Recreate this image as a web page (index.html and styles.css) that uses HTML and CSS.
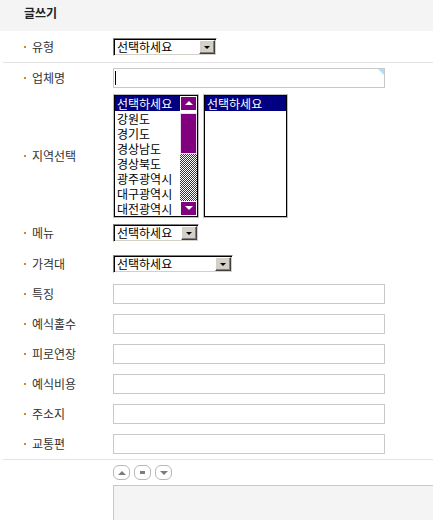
FILE: index.html
```html
<!DOCTYPE html>
<html lang="ko">
<head>
<meta charset="utf-8">
<title>글쓰기</title>
<link rel="stylesheet" href="styles.css">
</head>
<body>
<div class="board">
  <div class="head">글쓰기</div>
  <div class="form">
    <div class="row sep">
      <div class="label">유형</div>
      <span class="sel w104"><select><option>선택하세요</option></select><span class="btn"><i class="tri"></i></span></span>
    </div>
    <div class="row">
      <div class="label">업체명</div>
      <span class="focus"><input class="txt" type="text"><span class="corner"></span></span>
    </div>
    <div class="row region">
      <div class="label">지역선택</div>
      <div class="lists">
        <div class="list first">
          <ul class="items">
            <li class="on">선택하세요</li>
            <li>강원도</li>
            <li>경기도</li>
            <li>경상남도</li>
            <li>경상북도</li>
            <li>광주광역시</li>
            <li>대구광역시</li>
            <li>대전광역시</li>
          </ul>
          <div class="sbar">
            <span class="sbtn"><i class="up"></i></span>
            <span class="thumb"></span>
            <span class="track"></span>
            <span class="sbtn"><i class="down"></i></span>
          </div>
        </div>
        <div class="list second">
          <ul class="items">
            <li class="on">선택하세요</li>
          </ul>
        </div>
      </div>
    </div>
    <div class="row">
      <div class="label">메뉴</div>
      <span class="sel w86"><select><option>선택하세요</option></select><span class="btn"><i class="tri"></i></span></span>
    </div>
    <div class="row tall">
      <div class="label">가격대</div>
      <span class="sel w120"><select><option>선택하세요</option></select><span class="btn"><i class="tri"></i></span></span>
    </div>
    <div class="row">
      <div class="label">특징</div>
      <input class="txt" type="text">
    </div>
    <div class="row">
      <div class="label">예식홀수</div>
      <input class="txt" type="text">
    </div>
    <div class="row">
      <div class="label">피로연장</div>
      <input class="txt" type="text">
    </div>
    <div class="row">
      <div class="label">예식비용</div>
      <input class="txt" type="text">
    </div>
    <div class="row">
      <div class="label">주소지</div>
      <input class="txt" type="text">
    </div>
    <div class="row sep last">
      <div class="label">교통편</div>
      <input class="txt" type="text">
    </div>
    <div class="tools">
      <span class="tb"><i class="t-up"></i></span>
      <span class="tb"><i class="t-mid"></i></span>
      <span class="tb"><i class="t-down"></i></span>
    </div>
    <textarea class="editor"></textarea>
  </div>
</div>
</body>
</html>
```

FILE: styles.css
```css
* { box-sizing: border-box; }
html, body { overflow: hidden; }
body {
  margin: 0;
  background: #fff;
  font-family: "Noto Sans CJK KR", "Noto Sans", sans-serif;
  font-size: 12px;
  color: #333;
}
.head {
  height: 31px;
  background: #f4f4f4;
  padding: 5px 0 0 24px;
  font-weight: bold;
  line-height: 16px;
  color: #222;
}
.row {
  display: flex;
  align-items: center;
  height: 30px;
  margin-left: 3px;
}
.row.sep { border-bottom: 1px solid #e3e3e3; height: 32px; }
.row.sep.last { height: 31px; }
.row.tall { height: 31px; }
.row.region { height: 125px; }
.label {
  width: 110px;
  flex: none;
  padding-left: 21px;
  display: flex;
  align-items: center;
  gap: 6px;
  line-height: 14px;
  color: #333;
}
.label::before {
  content: "";
  width: 2px;
  height: 2px;
  background: #e0841c;
}

/* classic select */
.sel {
  display: inline-flex;
  align-items: stretch;
  height: 18px;
  padding: 1px;
  border: 1px solid;
  border-color: #808080 #fff #fff #808080;
  box-shadow: inset 1px 1px 0 #000, inset -1px -1px 0 #d4d0c8;
  background: #fff;
}
.w104 { width: 104px; }
.w86 { width: 86px; }
.w120 { width: 120px; }
.sel select {
  appearance: none;
  -webkit-appearance: none;
  flex: 1;
  min-width: 0;
  border: 0;
  background: transparent;
  font: 12px/14px "Noto Sans CJK KR", sans-serif;
  color: #000;
  padding: 0 0 0 2px;
  height: 14px;
  outline: none;
}
.btn {
  width: 16px;
  flex: none;
  background: #d4d0c8;
  border: 1px solid;
  border-color: #fff #404040 #404040 #fff;
  box-shadow: inset -1px -1px 0 #808080;
  display: flex;
  align-items: center;
  justify-content: center;
}
.tri {
  width: 0;
  height: 0;
  border-left: 3px solid transparent;
  border-right: 3px solid transparent;
  border-top: 3px solid #000;
  margin-top: 1px;
}

/* text inputs */
.txt {
  width: 272px;
  height: 20px;
  border: 1px solid #c9c9c9;
  padding: 0 3px;
  font: 12px "Noto Sans CJK KR", sans-serif;
  background: #fff;
  outline: none;
}
.focus { position: relative; display: inline-flex; }
.focus::before {
  content: "";
  position: absolute;
  left: 2px;
  top: 3px;
  width: 1px;
  height: 14px;
  background: #000;
}
.corner {
  position: absolute;
  top: 1px;
  right: 1px;
  width: 0;
  height: 0;
  border-top: 6px solid #a6e2ff;
  border-left: 6px solid transparent;
}

/* list boxes */
.lists { display: flex; gap: 4px; }
.list {
  height: 124px;
  border: 1px solid #bdbdbd;
  box-shadow: inset 0 0 0 1px #000;
  padding: 1px;
  display: flex;
  background: #fff;
}
.list.first { width: 86px; }
.list.second { width: 85px; }
.items {
  list-style: none;
  margin: 0;
  padding: 0;
  flex: 1;
  min-width: 0;
  overflow: hidden;
}
.items li {
  height: 15px;
  line-height: 15px;
  padding-left: 2px;
  white-space: nowrap;
  color: #000;
  font-size: 12px;
}
.items li.on { background: #000080; color: #fff; }
.sbar {
  width: 17px;
  flex: none;
  display: flex;
  flex-direction: column;
}
.sbtn {
  height: 15px;
  flex: none;
  background: #800080;
  box-shadow: inset 1px 1px 0 #fff, inset -1px -1px 0 #fff;
  display: flex;
  align-items: center;
  justify-content: center;
}
.up, .down {
  width: 0;
  height: 0;
  border-left: 4px solid transparent;
  border-right: 4px solid transparent;
}
.up { border-bottom: 4px solid #fff; }
.down { border-top: 4px solid #fff; }
.thumb {
  height: 41px;
  flex: none;
  margin-top: 2px;
  background: #800080;
  box-shadow: inset 1px 1px 0 #f0d8f0, inset -1px -1px 0 #f0d8f0;
}
.track {
  flex: 1;
  background: repeating-conic-gradient(#800080 0 25%, #fff 0 50%) 0 0 / 2px 2px;
}

/* editor tools */
.tools {
  display: flex;
  gap: 4px;
  padding: 5px 0 0 110px;
  margin-left: 3px;
}
.tb {
  width: 17px;
  height: 15px;
  border: 1px solid #b8b8b8;
  border-radius: 6px;
  background: #fff;
  display: flex;
  align-items: center;
  justify-content: center;
}
.t-up, .t-down {
  width: 0;
  height: 0;
  border-left: 4px solid transparent;
  border-right: 4px solid transparent;
}
.t-up { border-bottom: 4px solid #7c7c7c; }
.t-down { border-top: 4px solid #7c7c7c; }
.t-mid { width: 5px; height: 3px; background: #7c7c7c; }
.editor {
  display: block;
  margin: 5px 0 0 113px;
  width: 340px;
  height: 60px;
  background: #f4f4f4;
  border: 1px solid #c8c8c8;
  resize: none;
  outline: none;
}
```
